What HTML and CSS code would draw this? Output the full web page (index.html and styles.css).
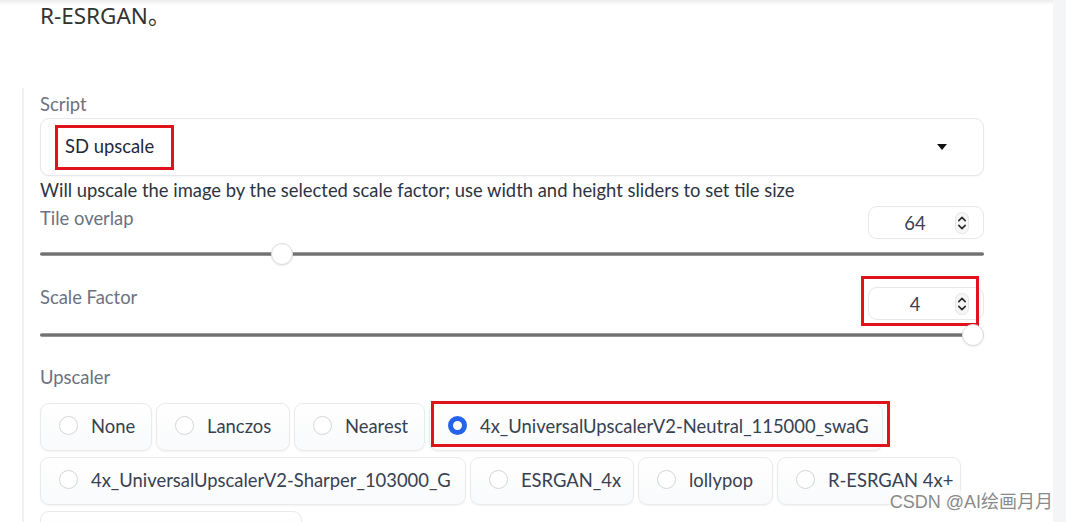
FILE: index.html
```html
<!DOCTYPE html>
<html lang="zh">
<head>
<meta charset="utf-8">
<title>SD upscale</title>
<link rel="stylesheet" href="styles.css">
</head>
<body>
<div class="page">
  <main class="main">
    <div class="topshade"></div>
    <p class="lead">R-ESRGAN。</p>
    <section class="panel">
      <div class="label">Script</div>
      <div class="dropdown">
        <span class="dd-value mark">SD upscale</span>
        <svg class="dd-arrow" width="10" height="6" viewBox="0 0 10 6"><path d="M0 0H10L5 6Z" fill="#111"/></svg>
      </div>
      <div class="desc">Will upscale the image by the selected scale factor; use width and height sliders to set tile size</div>

      <div class="field-row first">
        <div class="label">Tile overlap</div>
        <div class="num">
          <span class="num-val">64</span>
          <svg class="spin" width="14" height="22" viewBox="0 0 14 22"><rect x="0.5" y="0.5" width="13" height="21" rx="6" fill="#f6f6f7" stroke="#e3e5e8"/><path d="M3.8 8.6L7 5.4L10.2 8.6M3.8 13.4L7 16.6L10.2 13.4" fill="none" stroke="#2b2b2b" stroke-width="1.6" stroke-linecap="round" stroke-linejoin="round"/></svg>
        </div>
      </div>
      <div class="slider"><div class="track"></div><div class="thumb" style="left: calc(11px + (100% - 22px) * 0.25)"></div></div>

      <div class="field-row second">
        <div class="label">Scale Factor</div>
        <div class="num marked-num">
          <span class="num-val">4</span>
          <svg class="spin" width="14" height="22" viewBox="0 0 14 22"><rect x="0.5" y="0.5" width="13" height="21" rx="6" fill="#f6f6f7" stroke="#e3e5e8"/><path d="M3.8 8.6L7 5.4L10.2 8.6M3.8 13.4L7 16.6L10.2 13.4" fill="none" stroke="#2b2b2b" stroke-width="1.6" stroke-linecap="round" stroke-linejoin="round"/></svg>
        </div>
      </div>
      <div class="slider"><div class="track"></div><div class="thumb" style="left: calc(11px + (100% - 22px) * 1)"></div></div>

      <div class="label upscaler-label">Upscaler</div>
      <div class="radios">
        <label class="radio w-none"><span class="dot"></span>None</label>
        <label class="radio w-lanczos"><span class="dot"></span>Lanczos</label>
        <label class="radio w-nearest"><span class="dot"></span>Nearest</label>
        <label class="radio w-neutral selected"><span class="dot"></span>4x_UniversalUpscalerV2-Neutral_115000_swaG</label>
        <label class="radio w-sharper"><span class="dot"></span>4x_UniversalUpscalerV2-Sharper_103000_G</label>
        <label class="radio w-esrgan"><span class="dot"></span>ESRGAN_4x</label>
        <label class="radio w-lolly"><span class="dot"></span>lollypop</label>
        <label class="radio w-resrgan"><span class="dot"></span>R-ESRGAN 4x+</label>
        <label class="radio w-more"><span class="dot"></span></label>
      </div>
    </section>
    <div class="watermark">CSDN @AI绘画月月</div>
  </main>
  <aside class="gutter"></aside>
</div>
</body>
</html>
```

FILE: styles.css
```css
* { box-sizing: border-box; }
html, body { margin: 0; padding: 0; background: #fff; }
body {
  width: 1066px;
  height: 522px;
  overflow: hidden;
  font-family: "Lato", "Noto Sans", sans-serif;
  color: #374151;
}
.page {
  display: flex;
  height: 522px;
}
.main {
  position: relative;
  width: 1053px;
  flex: none;
}
.gutter {
  flex: 1;
  background: #f4f5f7;
}
.topshade {
  height: 5px;
  background: linear-gradient(#ececec, #fff);
}
.lead {
  margin: 0;
  padding-left: 40px;
  font-family: "Noto Sans", "Noto Sans CJK SC", sans-serif;
  font-size: 22.5px;
  line-height: 30px;
  color: #333;
  margin-top: -4px;
}
.panel {
  margin-top: 57px;
  margin-left: 22px;
  width: 962px;
  border-left: 2px solid #eef0f2;
  padding: 6px 0 0 16px;
  height: 460px;
}
.label {
  font-size: 18.4px;
  line-height: 20px;
  color: #6b7280;
}
.dropdown {
  margin-top: 4px;
  height: 58px;
  border: 1px solid #e5e7eb;
  border-radius: 9px;
  background: #fff;
  box-shadow: 0 1px 2px rgba(0,0,0,0.04);
  display: flex;
  align-items: center;
  justify-content: space-between;
  padding: 0 36px 0 14px;
}
.dd-value {
  font-size: 18.4px;
  color: #1f2937;
}
.mark {
  display: inline-block;
  border: 3px solid #e0121b;
  padding: 8px 17px 11px 7px;
  line-height: 20px;
}
.dd-arrow { display: block; }
.desc {
  margin-top: 4px;
  font-size: 18.4px;
  line-height: 20px;
  color: #2d3440;
}
.field-row {
  display: flex;
  justify-content: space-between;
  align-items: flex-start;
}
.field-row.first { margin-top: 6px; }
.field-row.first .label { padding-top: 2px; }
.field-row.second { margin-top: 21px; }
.num {
  position: relative;
  width: 116px;
  height: 33px;
  border: 1px solid #e5e7eb;
  border-radius: 9px;
  background: #fff;
  display: flex;
  align-items: center;
  padding-right: 14px;
}
.num-val {
  flex: 1;
  padding-left: 6px;
  text-align: center;
  font-size: 18.4px;
  color: #374151;
}
.spin { display: block; flex: none; }
.marked-num::after {
  content: "";
  position: absolute;
  left: -8px;
  right: 4px;
  top: -12px;
  bottom: -7px;
  border: 3px solid #e0121b;
}
.slider {
  position: relative;
  margin-top: 3px;
  height: 24px;
  display: flex;
  align-items: center;
}
.track {
  width: 100%;
  height: 4px;
  border-radius: 2px;
  background: linear-gradient(#b0b0b0, #5e5e5e 50%, #a8a8a8);
}
.thumb {
  position: absolute;
  top: 1px;
  width: 22px;
  height: 22px;
  margin-left: -11px;
  border-radius: 50%;
  background: #fff;
  border: 1px solid #dcdcdc;
  box-shadow: 0 1px 2px rgba(0,0,0,0.08);
}
.upscaler-label { margin-top: 20px; }
.radios {
  margin-top: 16px;
  display: flex;
  flex-wrap: wrap;
  column-gap: 4px;
  row-gap: 6px;
}
.radio {
  position: relative;
  height: 48px;
  display: flex;
  align-items: center;
  gap: 13px;
  padding-left: 18px;
  padding-bottom: 3px;
  border: 1px solid #e9eaec;
  border-radius: 9px;
  background: linear-gradient(#fff, #f9fafb);
  box-shadow: 0 1px 2px rgba(0,0,0,0.05);
  font-size: 18.4px;
  color: #374151;
  white-space: nowrap;
}
.dot {
  width: 19px;
  height: 19px;
  border-radius: 50%;
  border: 1px solid #d4d6da;
  background: #fff;
  flex: none;
}
.selected .dot {
  border: 5px solid #2563eb;
  background: #fff;
}
.selected::after {
  content: "";
  position: absolute;
  left: 1px;
  right: -8px;
  top: -3px;
  bottom: 3px;
  border: 3px solid #e0121b;
}
.w-none { width: 112px; }
.w-lanczos { width: 134px; }
.w-nearest { width: 131px; }
.w-neutral { width: 454px; }
.w-sharper { width: 426px; }
.w-esrgan { width: 164px; }
.w-lolly { width: 135px; }
.w-resrgan { width: 184px; }
.w-more { width: 262px; }
.watermark {
  position: absolute;
  right: 0;
  top: 490px;
  font-family: "Liberation Sans", "Noto Sans CJK SC", sans-serif;
  font-size: 18px;
  line-height: 24px;
  color: #8a8a8a;
  background: rgba(255,255,255,0.6);
}
```
